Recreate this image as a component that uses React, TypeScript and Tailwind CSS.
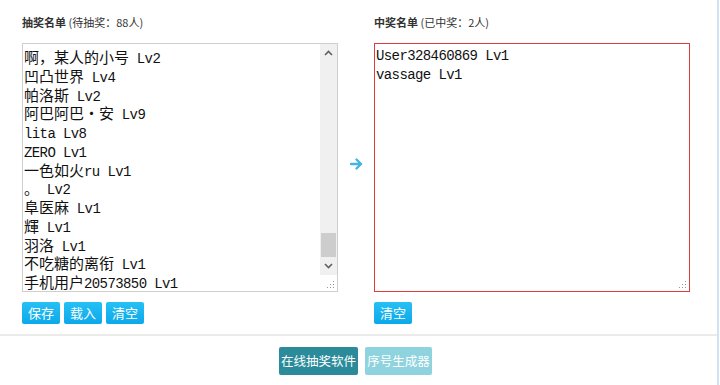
import React from "react";

const leftLines = [
  "啊，某人的小号 Lv2",
  "凹凸世界 Lv4",
  "帕洛斯 Lv2",
  "阿巴阿巴·安 Lv9",
  "lita Lv8",
  "ZERO Lv1",
  "一色如火ru Lv1",
  "。 Lv2",
  "阜医麻 Lv1",
  "輝 Lv1",
  "羽洛 Lv1",
  "不吃糖的离衔 Lv1",
  "手机用户20573850 Lv1",
];

const rightLines = ["User328460869 Lv1", "vassage Lv1"];

function Line({ text }: { text: string }) {
  const parts = text.split(/([\u00b7\u3000-\u9fff\uff00-\uffef]+)/).filter((p) => p.length > 0);
  return (
    <div className="whitespace-pre h-[18.75px] leading-[18.75px] text-[#111] overflow-visible">
      {parts.map((p, i) =>
        /[\u00b7\u3000-\u9fff\uff00-\uffef]/.test(p) ? (
          <span key={i} className="inline-block align-baseline h-[18.75px] text-[15px] leading-[18.75px] [font-family:'Noto_Sans_CJK_SC',sans-serif]">
            {p}
          </span>
        ) : (
          <span key={i} className="inline-block align-baseline h-[18.75px] text-[14px] leading-[18.75px] tracking-[-0.6px] [font-family:'Liberation_Mono',monospace]">
            {p}
          </span>
        )
      )}
    </div>
  );
}

function Grip() {
  return (
    <svg width="8" height="8" viewBox="0 0 8 8" className="block">
      <rect x="6" y="0" width="1" height="1" fill="#9a9a9a" />
      <rect x="3" y="3" width="1" height="1" fill="#9a9a9a" />
      <rect x="6" y="3" width="1" height="1" fill="#9a9a9a" />
      <rect x="0" y="6" width="1" height="1" fill="#9a9a9a" />
      <rect x="3" y="6" width="1" height="1" fill="#9a9a9a" />
      <rect x="6" y="6" width="1" height="1" fill="#9a9a9a" />
    </svg>
  );
}

function SmallBtn({ children }: { children: React.ReactNode }) {
  return (
    <button className="h-[22px] w-[38px] rounded-[2px] bg-gradient-to-b from-[#25c0f5] to-[#0aa8ea] text-white text-[13px] leading-[22px] [font-family:'Noto_Sans_CJK_SC',sans-serif]">
      {children}
    </button>
  );
}

export default function App() {
  return (
    <div className="w-[720px] h-[385px] bg-white flex overflow-hidden [font-family:'Noto_Sans_CJK_SC',sans-serif]">
      <div className="w-[717px] flex flex-col">
        <div className="flex pl-[22px] pt-[13px]">
          {/* Left column */}
          <div className="w-[316px] flex flex-col">
            <div className="h-[18px] leading-[18px] text-[11px] text-[#333]">
              <span className="font-bold">抽奖名单</span> (待抽奖：88人)
            </div>
            <div className="mt-[12px] h-[249px] border border-[#cfcfcf] flex overflow-hidden bg-white">
              <div className="flex-1 pl-[1px] pt-[3px] overflow-hidden">
                {leftLines.map((l, i) => (
                  <Line key={i} text={l} />
                ))}
              </div>
              <div className="w-[17px] flex flex-col">
                <div className="flex-1 bg-[#f0f0f0] flex flex-col items-center">
                  <svg width="9" height="6" viewBox="0 0 9 6" className="mt-[6px]">
                    <path d="M1 5 L4.5 1.5 L8 5" stroke="#606060" strokeWidth="1.6" fill="none" />
                  </svg>
                  <div className="flex-1" />
                  <div className="w-[15px] h-[24px] bg-[#cdcdcd]" />
                  <svg width="9" height="6" viewBox="0 0 9 6" className="mt-[6px] mb-[6px]">
                    <path d="M1 1 L4.5 4.5 L8 1" stroke="#606060" strokeWidth="1.6" fill="none" />
                  </svg>
                </div>
                <div className="h-[16px] bg-white flex items-end justify-end pr-[2px] pb-[2px]">
                  <Grip />
                </div>
              </div>
            </div>
            <div className="mt-[10px] flex gap-[4px]">
              <SmallBtn>保存</SmallBtn>
              <SmallBtn>载入</SmallBtn>
              <SmallBtn>清空</SmallBtn>
            </div>
          </div>

          {/* Arrow */}
          <div className="w-[36px] flex items-center justify-center pt-[18px] pb-[28px]">
            <svg width="13" height="12" viewBox="0 0 13 12">
              <path d="M1 6 H11 M6.5 1.5 L11 6 L6.5 10.5" stroke="#45b4de" strokeWidth="2.4" fill="none" strokeLinecap="round" strokeLinejoin="round" />
            </svg>
          </div>

          {/* Right column */}
          <div className="w-[316px] flex flex-col">
            <div className="h-[18px] leading-[18px] text-[11px] text-[#333]">
              <span className="font-bold">中奖名单</span> (已中奖：2人)
            </div>
            <div className="mt-[12px] h-[249px] border border-[#e03b3b] flex flex-col bg-white">
              <div className="flex-1 pl-[1px] pt-0">
                {rightLines.map((l, i) => (
                  <Line key={i} text={l} />
                ))}
              </div>
              <div className="flex justify-end pr-[2px] pb-[2px]">
                <Grip />
              </div>
            </div>
            <div className="mt-[10px] flex">
              <SmallBtn>清空</SmallBtn>
            </div>
          </div>
        </div>

        <div className="mt-[10px] h-[2px] bg-[#ebebeb]" />

        <div className="mt-[11px] flex justify-center gap-[7px] pr-[6px]">
          <button className="h-[28px] w-[79px] rounded-[2px] bg-[#2b8b9a] text-white text-[12.5px] leading-[28px]">
            在线抽奖软件
          </button>
          <button className="h-[28px] w-[67px] rounded-[2px] bg-[#8fd3df] text-white text-[12.5px] leading-[28px]">
            序号生成器
          </button>
        </div>
      </div>
      <div className="w-[2px] bg-[#cfe4f2]" />
      <div className="flex-1 bg-white" />
    </div>
  );
}
